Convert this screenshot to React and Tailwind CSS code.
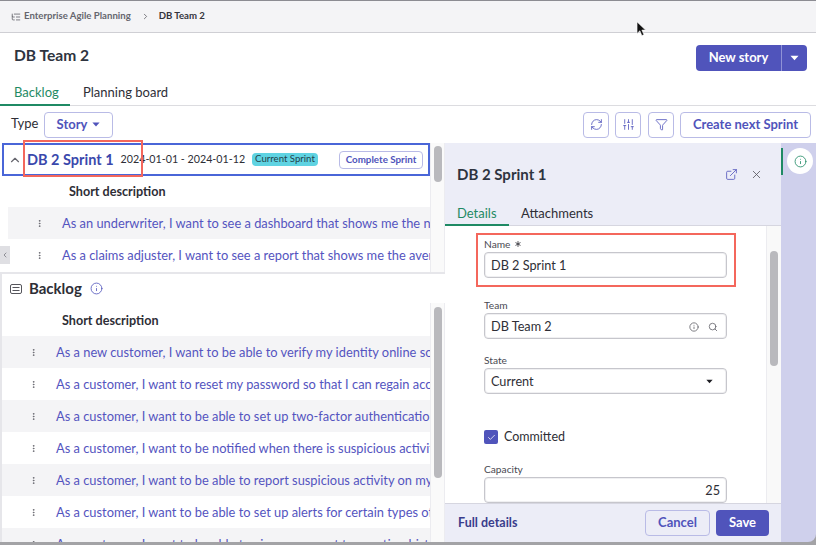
import { ChevronUp, ChevronLeft, ChevronRight, RefreshCw, SlidersVertical, Funnel, ExternalLink, X, Info, Search, Check, EllipsisVertical, ListTree, Asterisk } from 'lucide-react';

const sprintStories = [
  'As an underwriter, I want to see a dashboard that shows me the number of policies',
  'As a claims adjuster, I want to see a report that shows me the average claim time',
];

const backlogStories = [
  'As a new customer, I want to be able to verify my identity online so that I can',
  'As a customer, I want to reset my password so that I can regain access to my account',
  'As a customer, I want to be able to set up two-factor authentication for my account',
  'As a customer, I want to be notified when there is suspicious activity on my account',
  'As a customer, I want to be able to report suspicious activity on my account',
  'As a customer, I want to be able to set up alerts for certain types of transactions',
  'As a customer, I want to be able to view my recent transaction history on my account',
];

function Caret({ className }) {
  return (
    <svg viewBox="0 0 10 6" className={className} fill="currentColor">
      <path d="M0.5 0.5h9L5 5.5z" />
    </svg>
  );
}

function StoryRow({ text, striped, indent }) {
  return (
    <div className={`h-8 shrink-0 flex items-center overflow-hidden whitespace-nowrap ${striped ? 'bg-[#f4f4f6]' : 'bg-white'} ${indent}`}>
      <EllipsisVertical size={9} strokeWidth={2.5} className="shrink-0 text-[#66666e]" />
      <span className="ml-[18px] pt-[1px] text-[12.85px] text-[#5454c0]">{text}</span>
    </div>
  );
}

function Field({ label, required, className, children }) {
  return (
    <div className={className}>
      <div className="h-[14px] pb-[2px] flex items-center gap-[3px] text-[10.2px] leading-[12px] text-[#4a4a52]">
        {label}
        {required && <Asterisk size={10} className="text-[#33333a]" />}
      </div>
      {children}
    </div>
  );
}

function inputClass(extra) {
  return `h-[26px] flex items-center rounded border border-[#c6c6cc] bg-white shadow-[inset_0_0_0_1px_#f0f0f2] px-[6px] pt-[1px] text-[12.7px] text-[#2e2e36] ${extra}`;
}

export default function App() {
  return (
    <div className="relative w-[816px] h-[545px] overflow-hidden bg-white font-['Lato',sans-serif] text-[#2e2e36]">
      {/* breadcrumb */}
      <div className="h-[33px] bg-[#f4f4f6] border-t border-t-[#8c8c92] border-b border-b-[#cfcfd4] flex items-center pl-[11px] text-[9.6px] font-bold">
        <ListTree size={10} className="text-[#66666e]" />
        <span className="ml-[3px] text-[#66666e]">Enterprise Agile Planning</span>
        <ChevronRight size={9} className="ml-[10px] text-[#55555c]" />
        <span className="ml-[9px] text-[#35353c]">DB Team 2</span>
      </div>

      {/* title row */}
      <div className="h-[45px] flex items-start justify-between pl-[14px] pr-[9px]">
        <h1 className="mt-[9px] text-[15.6px] leading-[26px] font-bold text-[#2e3440]">DB Team 2</h1>
        <div className="mt-3 h-[26px] flex rounded bg-[#5054bb] text-white">
          <div className="w-[85px] flex items-center justify-center text-[13px] font-bold">New story</div>
          <div className="w-[26px] border-l border-[#8f92d6] flex items-center justify-center">
            <Caret className="w-[9px] h-[6px]" />
          </div>
        </div>
      </div>

      {/* tabs */}
      <div className="h-[28px] flex items-start border-b border-[#dcdce0] text-[13px] leading-[28px]">
        <div className="w-[70px] h-[28px] border-b-2 border-[#1f8a64] pl-[14px] text-[#1f8a64]">Backlog</div>
        <div className="ml-[13px]">Planning board</div>
      </div>

      {/* toolbar */}
      <div className="h-[37px] flex items-center pl-[11px] pr-[5px]">
        <span className="w-[27px] text-[13px] pb-[1px]">Type</span>
        <div className="ml-[6px] w-[69px] h-[26px] rounded border border-[#b9bbe6] flex items-center justify-center gap-[5px] text-[13px] font-bold text-[#5054bb]">
          Story
          <Caret className="w-[8px] h-[5px]" />
        </div>
        <div className="ml-auto flex gap-[6px] text-[#5054bb]">
          <div className="w-[26px] h-[26px] rounded border border-[#b9bbe6] flex items-center justify-center"><RefreshCw size={13} strokeWidth={1.5} /></div>
          <div className="w-[26px] h-[26px] rounded border border-[#b9bbe6] flex items-center justify-center"><SlidersVertical size={13} strokeWidth={1.5} /></div>
          <div className="ml-[1px] w-[26px] h-[26px] rounded border border-[#b9bbe6] flex items-center justify-center"><Funnel size={13} strokeWidth={1.5} /></div>
          <div className="w-[131px] h-[26px] rounded border border-[#b9bbe6] flex items-center justify-center text-[13px] font-bold">Create next Sprint</div>
        </div>
      </div>

      {/* main */}
      <div className="flex h-[399px] bg-[#a3a3a6]">
        <div className="w-[445px] shrink-0 flex flex-col bg-white">
          {/* sprint section */}
          <div className="h-[129px] shrink-0 flex pl-[2px]">
            <div className="w-[428px] shrink-0 flex flex-col overflow-hidden">
              <div className="h-[33px] shrink-0 border-2 border-[#4a66d8] flex items-center pl-[4px] pr-[5px] whitespace-nowrap">
                <ChevronUp size={14} className="shrink-0 text-[#66666e]" />
                <span className="ml-[5px] text-[14.5px] font-bold text-[#3a48ac]">DB 2 Sprint 1</span>
                <span className="ml-[7px] text-[10.7px]">2024-01-01 - 2024-01-12</span>
                <span className="ml-[7px] h-[13px] px-[3px] rounded-sm bg-[#5fd3e2] flex items-center text-[9.6px] text-[#24424a]">Current Sprint</span>
                <div className="ml-auto w-[84px] h-[18px] rounded border border-[#b9bbe6] flex items-center justify-center text-[9.8px] font-bold text-[#5054bb]">Complete Sprint</div>
              </div>
              <div className="h-[31px] shrink-0 pl-[67px] pt-[1px] flex items-center text-[12.6px] font-bold">Short description</div>
              <div className="pl-[6px]">
                {sprintStories.map((text, i) => (
                  <StoryRow key={text} text={text} striped={i === 0} indent="pl-[27px]" />
                ))}
              </div>
            </div>
            <div className="flex-1 border-x border-[#ececf0] bg-[#fafafa] flex justify-center">
              <div className="w-[8px] h-[36px] mt-[3px] rounded bg-[#b9b9bd]" />
            </div>
          </div>

          {/* backlog section */}
          <div className="flex-1 min-h-0 border-t-2 border-l-2 border-[#e6e6ea] flex flex-col">
            <div className="h-[29px] shrink-0 flex items-center pl-[8px]">
              <svg viewBox="0 0 12 10" className="w-[12px] h-[10px] text-[#55555c]" fill="none" stroke="currentColor">
                <rect x="0.5" y="0.5" width="11" height="9" rx="1.5" />
                <path d="M2.5 3.5h7M2.5 6.5h7" />
              </svg>
              <span className="ml-[7px] text-[15px] font-bold">Backlog</span>
              <Info size={13} strokeWidth={1.5} className="ml-[8px] text-[#5054bb]" />
            </div>
            <div className="flex-1 min-h-0 flex">
              <div className="w-[428px] shrink-0 flex flex-col overflow-hidden">
                <div className="h-[33px] shrink-0 pl-[60px] pt-[3px] flex items-center text-[12.6px] font-bold">Short description</div>
                {backlogStories.map((text, i) => (
                  <StoryRow key={text} text={text} striped={i % 2 === 0} indent="pl-[27px]" />
                ))}
              </div>
              <div className="flex-1 border-x border-[#ececf0] bg-[#fafafa] flex justify-center">
                <div className="w-[8px] h-[171px] mt-[4px] rounded bg-[#b9b9bd]" />
              </div>
            </div>
          </div>
        </div>

        {/* details panel */}
        <div className="w-[336px] shrink-0 flex flex-col bg-[#ecedf7]">
          <div className="h-[60px] shrink-0 flex items-center pl-[12px] pr-[18px] pt-[2px]">
            <h2 className="text-[15px] font-bold text-[#2e3440]">DB 2 Sprint 1</h2>
            <ExternalLink size={13} strokeWidth={1.5} className="ml-auto text-[#5054bb]" />
            <X size={13} strokeWidth={1.5} className="ml-[12px] text-[#55555c]" />
          </div>
          <div className="h-[23px] shrink-0 flex border-b border-[#d6d6e0] text-[13px] leading-[20px]">
            <div className="w-[64px] h-[23px] border-b-2 border-[#1f8a64] pl-[12px] text-[#1f8a64]">Details</div>
            <div className="ml-[12px]">Attachments</div>
          </div>
          <div className="flex-1 min-h-0 flex">
            <div className="w-[321px] shrink-0 bg-white overflow-hidden pl-[39px] pr-[39px] pt-[12px]">
              <Field label="Name" required>
                <div className={inputClass('')}>DB 2 Sprint 1</div>
              </Field>
              <Field label="Team" className="mt-[21px]">
                <div className={inputClass('')}>
                  DB Team 2
                  <Info size={10} className="ml-auto text-[#66666e]" />
                  <Search size={10} className="ml-[9px] mr-[2px] text-[#66666e]" />
                </div>
              </Field>
              <Field label="State" className="mt-[15px]">
                <div className={inputClass('')}>
                  Current
                  <Caret className="ml-auto mr-[7px] w-[7px] h-[5px] text-[#1f1f24]" />
                </div>
              </Field>
              <div className="mt-[36px] h-[14px] flex items-center gap-[6px] text-[12.5px]">
                <div className="w-[14px] h-[14px] rounded-[2px] bg-[#5054bb] flex items-center justify-center">
                  <Check size={9} strokeWidth={2} className="text-white" />
                </div>
                Committed
              </div>
              <Field label="Capacity" className="mt-[19px]">
                <div className={inputClass('justify-end')}>25</div>
              </Field>
            </div>
            <div className="flex-1 bg-[#f9f9f9] border-l border-[#ececf0] flex justify-center">
              <div className="w-[8px] h-[115px] mt-[25px] rounded bg-[#b9b9bd]" />
            </div>
          </div>
          <div className="h-[39px] shrink-0 border-t border-[#d6d6e0] flex items-center pl-[13px] pr-[12px]">
            <span className="text-[12.5px] font-bold text-[#3a3d8c]">Full details</span>
            <div className="ml-auto w-[65px] h-[26px] rounded border border-[#b9bbe6] flex items-center justify-center text-[13px] font-bold text-[#5054bb]">Cancel</div>
            <div className="ml-[6px] w-[53px] h-[26px] rounded bg-[#5054bb] flex items-center justify-center text-[13px] font-bold text-white">Save</div>
          </div>
        </div>

        {/* right rail */}
        <div className="flex-1 bg-[#cfd0ec] rounded-br-lg" />
      </div>

      {/* window edge */}
      <div className="h-[3px] bg-[#a3a3a6]" />

      {/* overlays */}
      <div className="absolute left-[781px] top-[148px] w-[2px] h-[27px] bg-[#1f8a64]" />
      <div className="absolute left-[787px] top-[148px] w-[26px] h-[26px] rounded-full bg-white flex items-center justify-center">
        <Info size={13} strokeWidth={1.5} className="text-[#1f8a64]" />
      </div>
      <div className="absolute left-0 top-[246px] w-[10px] h-[18px] bg-[#dfdfe3] flex items-center justify-center">
        <ChevronLeft size={8} className="text-[#66666e]" />
      </div>
      <div className="absolute left-[23px] top-[140px] w-[120px] h-[37px] border-2 border-[#f4675c]" />
      <div className="absolute left-[476px] top-[233px] w-[260px] h-[54px] border-2 border-[#f4675c]" />
      <svg viewBox="0 0 12 18" className="absolute left-[636px] top-[21px] w-[11px] h-[16px]">
        <path d="M1 1v13l3.2-3 2.2 5.4 2.3-1-2.3-5.2H10.5z" fill="#111" stroke="#fff" strokeWidth="0.6" />
      </svg>
    </div>
  );
}
